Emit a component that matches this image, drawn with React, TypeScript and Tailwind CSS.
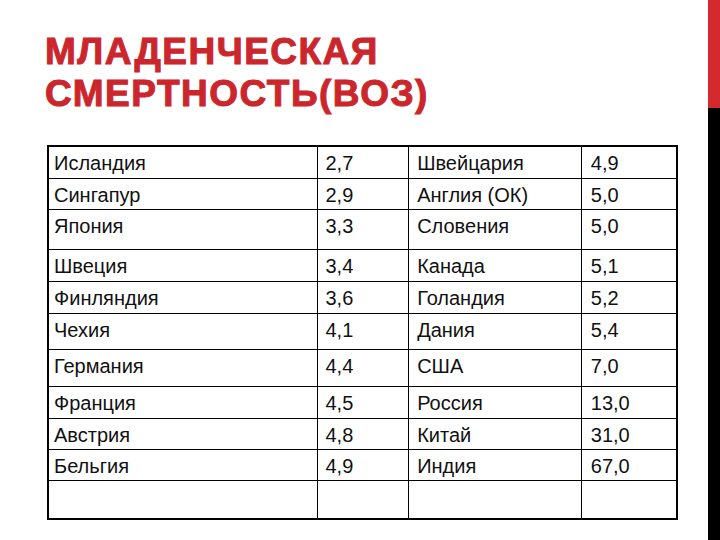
const rows: [string, string, string, string, number][] = [
  ['Исландия', '2,7', 'Швейцария', '4,9', 32],
  ['Сингапур', '2,9', 'Англия (ОК)', '5,0', 31],
  ['Япония', '3,3', 'Словения', '5,0', 40],
  ['Швеция', '3,4', 'Канада', '5,1', 32],
  ['Финляндия', '3,6', 'Голандия', '5,2', 32],
  ['Чехия', '4,1', 'Дания', '5,4', 36],
  ['Германия', '4,4', 'США', '7,0', 37],
  ['Франция', '4,5', 'Россия', '13,0', 32],
  ['Австрия', '4,8', 'Китай', '31,0', 31],
  ['Бельгия', '4,9', 'Индия', '67,0', 31],
  ['', '', '', '', 39],
];

export default function App() {
  return (
    <div className="flex w-[720px] h-[540px] bg-white overflow-hidden font-['Liberation_Sans',Arial,sans-serif]">
      <div className="flex-1 flex flex-col">
        <h1 className="pt-[31px] pl-[45px] text-[37px] leading-[42px] font-bold tracking-[1.5px] text-[#cc262d] uppercase [-webkit-text-stroke:1px_#cc262d]">
          Младенческая
          <br />
          Смертность(ВОЗ)
        </h1>

        <table className="mt-[30px] ml-[47px] w-[631px] border-collapse border-2 border-black text-[20px] leading-[23px] text-[#111]">
          <colgroup>
            <col className="w-[270px]" />
            <col className="w-[92px]" />
            <col className="w-[173px]" />
            <col className="w-[96px]" />
          </colgroup>
          <tbody>
            {rows.map(([a, b, c, d, h], i) => (
              <tr key={i} style={{ height: h }}>
                <td className="border border-black align-top pt-[5px] pl-[5px]">{a}</td>
                <td className="border border-black align-top pt-[5px] pl-[8px]">{b}</td>
                <td className="border border-black align-top pt-[5px] pl-[8px]">{c}</td>
                <td className="border border-black align-top pt-[5px] pl-[9px]">{d}</td>
              </tr>
            ))}
          </tbody>
        </table>
      </div>

      <div className="w-[12px] flex flex-col">
        <div className="h-[108px] bg-[#d42a2f]" />
        <div className="flex-1 bg-black" />
      </div>
    </div>
  );
}
